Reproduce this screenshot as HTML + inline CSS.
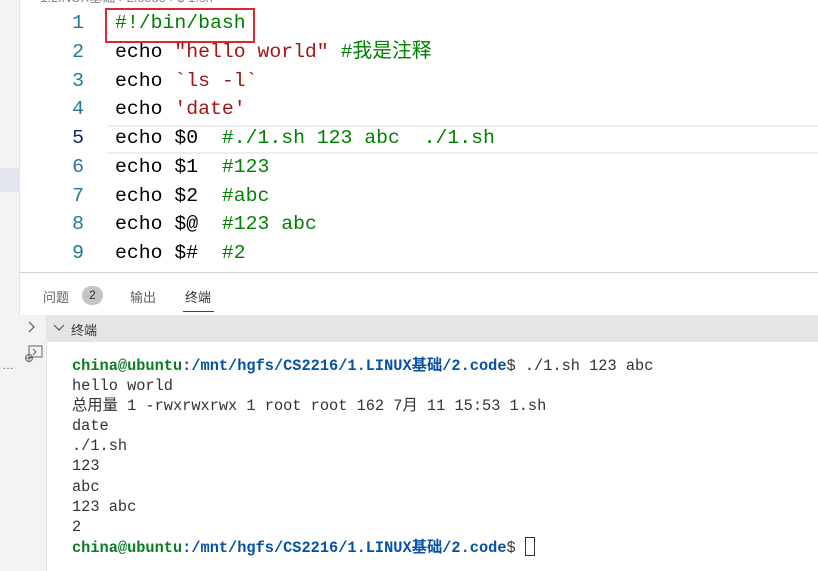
<!DOCTYPE html>
<html><head><meta charset="utf-8"><style>
body{margin:0;width:818px;height:571px;overflow:hidden;background:#fff;position:relative;font-family:"Liberation Sans","Noto Sans CJK SC",sans-serif}
.abs{position:absolute}
.mono{font-family:"Liberation Mono","Noto Sans CJK SC",monospace}
.ed{left:0;top:0;font-size:19.8px;line-height:28.75px}
.ln{position:absolute;left:60px;width:24px;text-align:right;color:#237893}
.cd{position:absolute;left:115px;white-space:pre;color:#000}
.g{color:#008000}.r{color:#a31515}
.t{left:72px;top:356px;font-size:15.3px;line-height:20.1px;color:#333;white-space:pre}
.pg{color:#0a7d22;font-weight:bold}.pb{color:#0451a5;font-weight:bold}
</style></head><body>
<div class="abs" style="left:0;top:0;width:19px;height:571px;background:#f3f3f3;border-right:1px solid #e5e5e5"></div>
<div class="abs" style="left:0;top:168px;width:19px;height:24px;background:#e4e6f1"></div>
<div class="abs" style="left:2px;top:358px;font-size:12px;color:#555">…</div>
<div class="abs" style="left:40px;top:-13px;font-size:13px;color:#888">1.LINUX基础 › 2.code › $ 1.sh</div>
<div class="abs" style="left:107px;top:125px;width:711px;height:25px;border-top:2px solid #eee;border-bottom:2px solid #eee"></div>
<div class="abs" style="left:105px;top:8px;width:150px;height:35px;border:2px solid #e0262a;box-sizing:border-box"></div>
<div class="abs mono ed" style="width:818px;top:9px">
<div class="ln" style="top:0">1</div><div class="cd g" style="top:0">#!/bin/bash</div>
<div class="ln" style="top:28.75px">2</div><div class="cd" style="top:28.75px">echo <span class="r">"hello world"</span> <span class="g">#我是注释</span></div>
<div class="ln" style="top:57.5px">3</div><div class="cd" style="top:57.5px">echo <span class="r">`ls -l`</span></div>
<div class="ln" style="top:86.25px">4</div><div class="cd" style="top:86.25px">echo <span class="r">'date'</span></div>
<div class="ln" style="top:115px;color:#0b216f">5</div><div class="cd" style="top:115px">echo $0  <span class="g">#./1.sh 123 abc  ./1.sh</span></div>
<div class="ln" style="top:143.75px">6</div><div class="cd" style="top:143.75px">echo $1  <span class="g">#123</span></div>
<div class="ln" style="top:172.5px">7</div><div class="cd" style="top:172.5px">echo $2  <span class="g">#abc</span></div>
<div class="ln" style="top:201.25px">8</div><div class="cd" style="top:201.25px">echo $@  <span class="g">#123 abc</span></div>
<div class="ln" style="top:230px">9</div><div class="cd" style="top:230px">echo $#  <span class="g">#2</span></div>
</div>
<div class="abs" style="left:19px;top:272px;width:799px;height:1px;background:#d4d4d4"></div>
<div class="abs" style="left:43px;top:287px;font-size:13px;color:#616161">问题</div>
<div class="abs" style="left:82px;top:286px;width:21px;height:19px;border-radius:10px;background:#c4c4c4;font-size:12px;text-align:center;line-height:19px;color:#333">2</div>
<div class="abs" style="left:130px;top:287px;font-size:13px;color:#616161">输出</div>
<div class="abs" style="left:185px;top:287px;font-size:13px;color:#333">终端</div>
<div class="abs" style="left:183px;top:311px;width:31px;height:1px;background:#424242"></div>
<div class="abs" style="left:19px;top:315px;width:27px;height:256px;background:#f3f3f3;border-right:1px solid #e0e0e0"></div>
<div class="abs" style="left:46px;top:315px;width:772px;height:27px;background:#e5e5e5"></div>
<svg class="abs" style="left:26px;top:320px" width="12" height="14"><path d="M3 2l5 5-5 5" fill="none" stroke="#555" stroke-width="1.2"/></svg>
<svg class="abs" style="left:52px;top:323px" width="14" height="10"><path d="M2 2l5 5 5-5" fill="none" stroke="#555" stroke-width="1.2"/></svg>
<div class="abs" style="left:71px;top:320px;font-size:13px;color:#333">终端</div>
<svg class="abs" style="left:22px;top:344px" width="22" height="20"><rect x="7" y="2" width="13" height="11" fill="none" stroke="#666"/><path d="M11 5l3 3-3 3" fill="none" stroke="#666"/><circle cx="7" cy="14" r="3.5" fill="none" stroke="#666"/><path d="M3 14h8M7 10v8" stroke="#666"/></svg>
<div class="abs mono t"><span class="pg">china@ubuntu</span><span class="pb">:/mnt/hgfs/CS2216/1.LINUX基础/2.code</span>$ ./1.sh 123 abc
hello world
总用量 1 -rwxrwxrwx 1 root root 162 7月 11 15:53 1.sh
date
./1.sh
123
abc
123 abc
2
<span class="pg">china@ubuntu</span><span class="pb">:/mnt/hgfs/CS2216/1.LINUX基础/2.code</span>$ <span style="display:inline-block;width:8px;height:17px;border:1px solid #333;vertical-align:-4px"></span></div>
</body></html>
